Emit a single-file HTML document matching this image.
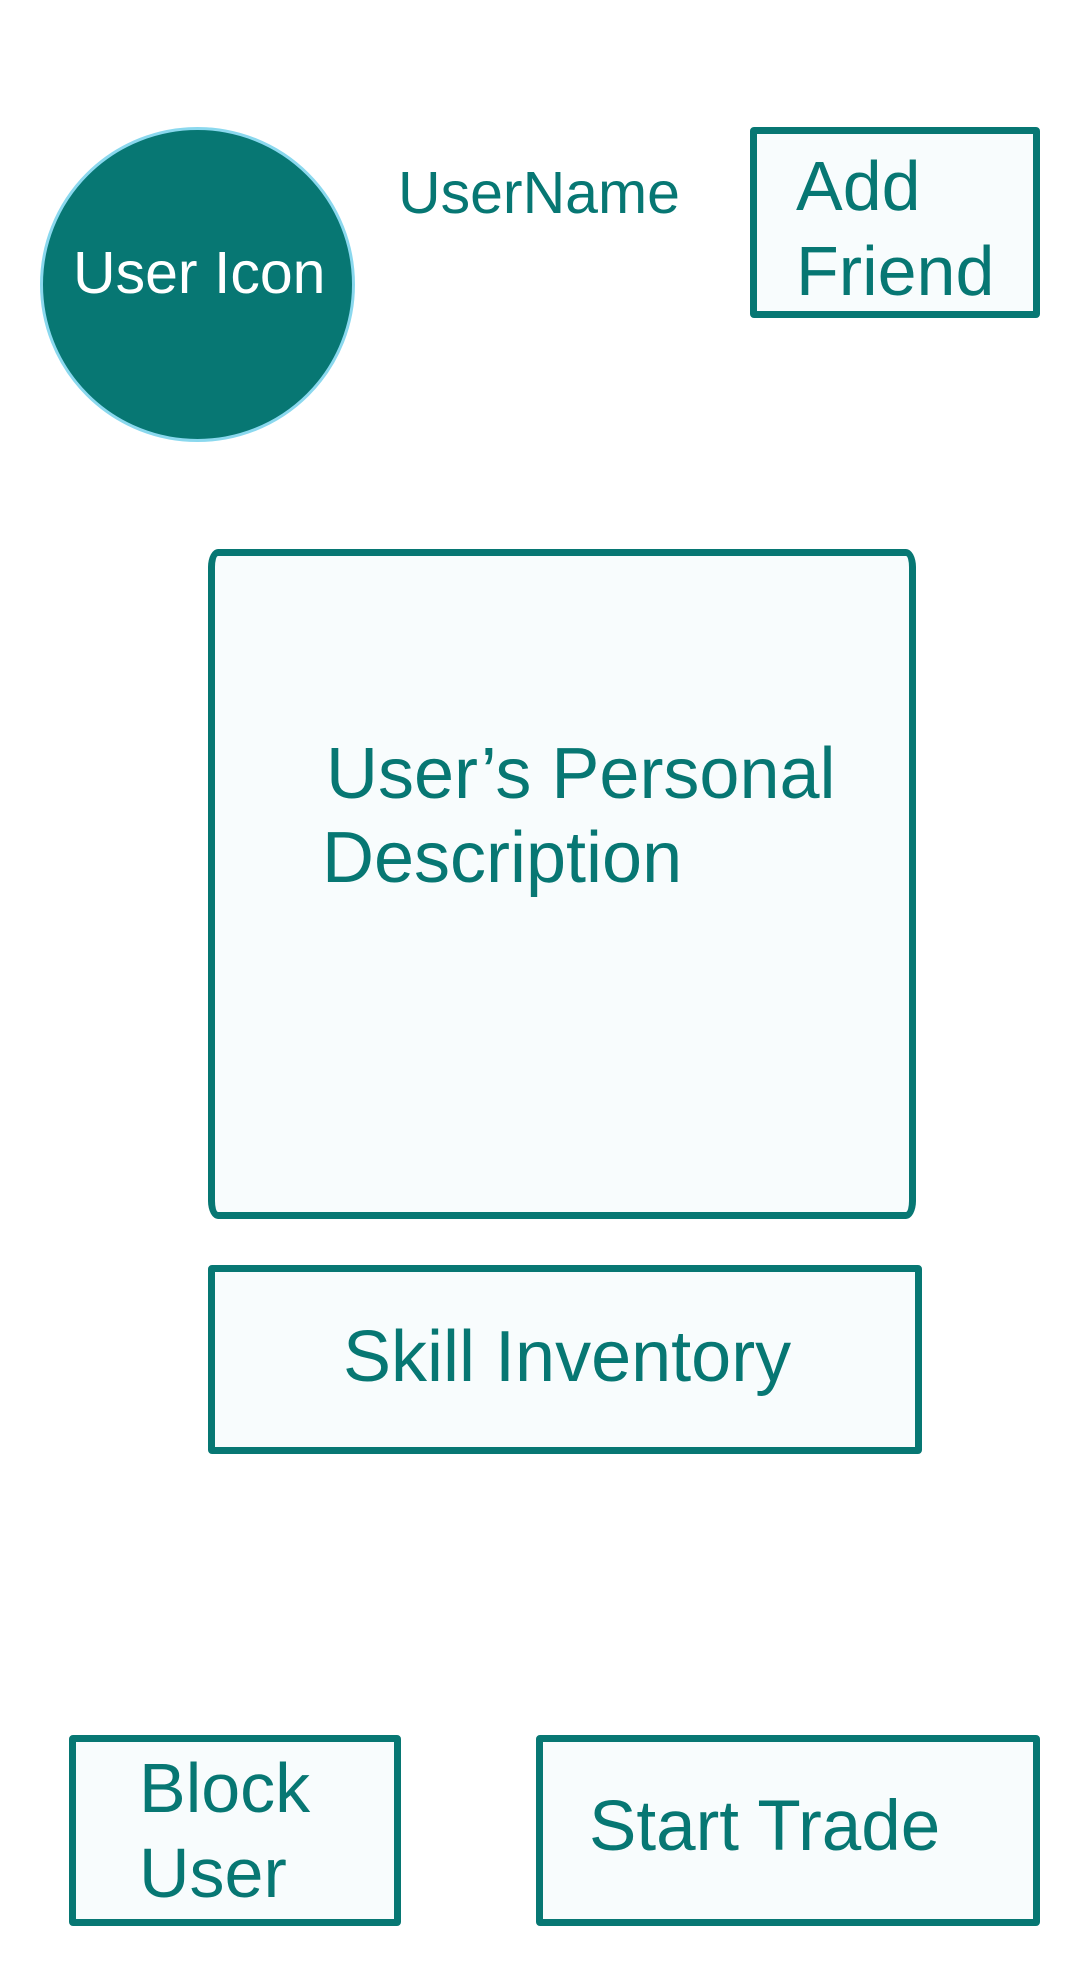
<!DOCTYPE html>
<html><head><meta charset="utf-8"><style>
html,body{margin:0;padding:0;background:#fff;width:1080px;height:1980px;overflow:hidden;position:relative;font-family:"Liberation Sans",sans-serif;}
.t{position:absolute;line-height:1;color:#077773;white-space:nowrap;}
.b{position:absolute;box-sizing:border-box;border:7px solid #077773;background:#f8fcfd;border-radius:4px;}
</style></head><body>
<div style="position:absolute;left:40px;top:127px;width:315px;height:315px;border-radius:50%;background:#077773;box-sizing:border-box;border:3px solid #8ad8ee;"></div>
<div class="t" style="left:73px;top:244px;font-size:59px;color:#fff;">User Icon</div>
<div class="t" style="left:398px;top:164px;font-size:59px;">UserName</div>
<div class="b" style="left:750px;top:127px;width:290px;height:191px;"></div>
<div class="t" style="left:796px;top:151px;font-size:70px;">Add</div>
<div class="t" style="left:796px;top:236px;font-size:70px;">Friend</div>
<div class="b" style="left:208px;top:549px;width:708px;height:670px;border-radius:10px/18px;"></div>
<div class="t" style="left:326px;top:738px;font-size:72px;">User’s Personal</div>
<div class="t" style="left:322px;top:822px;font-size:72px;">Description</div>
<div class="b" style="left:208px;top:1265px;width:714px;height:189px;"></div>
<div class="t" style="left:343px;top:1321px;font-size:72px;">Skill Inventory</div>
<div class="b" style="left:69px;top:1735px;width:332px;height:191px;"></div>
<div class="t" style="left:139px;top:1753px;font-size:70px;">Block</div>
<div class="t" style="left:139px;top:1838px;font-size:70px;">User</div>
<div class="b" style="left:536px;top:1735px;width:504px;height:191px;"></div>
<div class="t" style="left:589px;top:1791px;font-size:71px;">Start Trade</div>
</body></html>
